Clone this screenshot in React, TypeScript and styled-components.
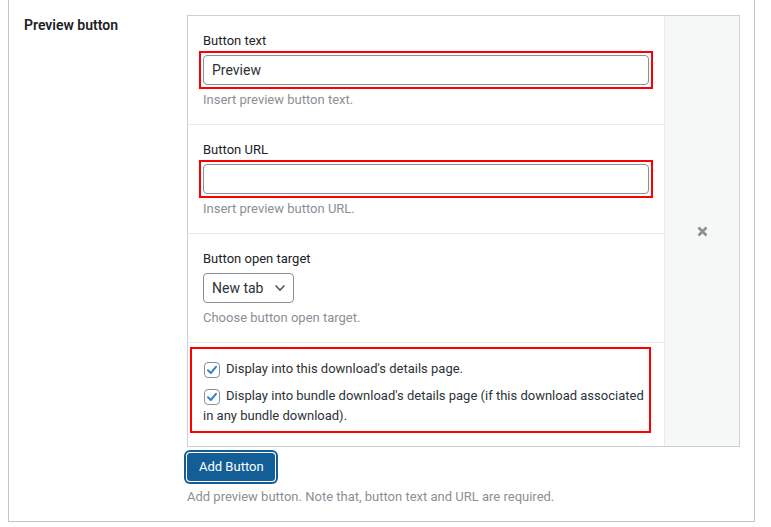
import React from 'react';
import styled, { createGlobalStyle } from 'styled-components';

const GlobalStyle = createGlobalStyle`
  html, body {
    margin: 0;
    padding: 0;
    background: #fff;
  }
  body {
    font-family: Roboto, "Noto Sans", "Liberation Sans", sans-serif;
    font-size: 13px;
    line-height: 18px;
    color: #1d2327;
  }
  * {
    box-sizing: border-box;
  }
`;

const Page = styled.div`
  padding-left: 8px;
`;

const Frame = styled.div`
  width: 747px;
  display: flex;
  padding: 15px 0 15px;
  border: 1px solid #c3c4c7;
  border-top: none;
`;

const RowHeading = styled.div`
  width: 178px;
  flex: none;
  padding: 1px 0 0 15px;
  font-size: 14px;
  font-weight: 600;
  line-height: 18px;
`;

const FieldColumn = styled.div`
  flex: none;
  width: 553px;
`;

const Repeater = styled.div`
  display: flex;
  border: 1px solid #cfcfd1;
  background: #fff;
`;

const Fields = styled.div`
  flex: none;
  width: 476px;
`;

const Field = styled.div<{ $compact?: boolean }>`
  padding: ${(p) => (p.$compact ? '4px 13px 13px 2px' : '16px 15px 15px 15px')};
  border-bottom: 1px solid #eaeaeb;

  &:last-child {
    border-bottom: none;
  }
`;

const FieldLabel = styled.div`
  font-size: 13px;
  line-height: 18px;
`;

const Highlight = styled.div<{ $pad?: string }>`
  border: 2px solid #ff0000;
  padding: ${(p) => p.$pad || '2px'};
  margin: ${(p) => (p.$pad ? '0' : '1px -4px -4px')};
`;

const TextInput = styled.div`
  height: 30px;
  border: 1px solid #8c8f94;
  border-radius: 4px;
  padding: 0 8px;
  font-size: 14px;
  line-height: 28px;
  color: #2c3338;
  background: #fff;
`;

const Help = styled.div`
  margin-top: 6px;
  color: #8c8f94;
  font-size: 13px;
  line-height: 18px;
`;

const Select = styled.div`
  margin-top: 5px;
  width: 91px;
  height: 30px;
  display: flex;
  align-items: center;
  justify-content: space-between;
  padding: 0 7px 0 8px;
  border: 1px solid #8c8f94;
  border-radius: 4px;
  font-size: 14px;
  color: #2c3338;
`;

const CheckLine = styled.label`
  display: block;
  font-size: 13px;
  line-height: 20px;
  color: #2c3338;

  & + & {
    margin-top: 7px;
  }
`;

const Box = styled.span`
  display: inline-flex;
  align-items: center;
  justify-content: center;
  width: 16px;
  height: 16px;
  margin: 0 6px 0 1px;
  vertical-align: -3px;
  border: 1px solid #8c8f94;
  border-radius: 4px;
  background: #fff;
`;

const Remove = styled.div`
  flex: 1;
  display: flex;
  align-items: center;
  justify-content: center;
  background: #f6f7f7;
  border-left: 1px solid #ebebeb;
`;

const AddButton = styled.button`
  display: block;
  margin: 6px 0 0 0;
  height: 28px;
  padding: 0 10px 0 11px;
  border: 1px solid #135e96;
  border-radius: 3px;
  background: #135e96;
  color: #fff;
  font-family: inherit;
  font-size: 13px;
  line-height: 26px;
  box-shadow: 0 0 0 1px #fff, 0 0 0 3px #135e96;
`;

const FootNote = styled(Help)`
  margin-top: 7px;
`;

const Check = () => (
  <Box>
    <svg width="12" height="12" viewBox="0 0 12 12">
      <path d="M2 6.3 L4.8 9 L10 2.8" fill="none" stroke="#3582c4" strokeWidth="2" strokeLinecap="round" strokeLinejoin="round" />
    </svg>
  </Box>
);

export default function App() {
  return (
    <Page>
      <GlobalStyle />
      <Frame>
        <RowHeading>Preview button</RowHeading>
        <FieldColumn>
          <Repeater>
            <Fields>
              <Field>
                <FieldLabel>Button text</FieldLabel>
                <Highlight>
                  <TextInput>Preview</TextInput>
                </Highlight>
                <Help>Insert preview button text.</Help>
              </Field>
              <Field>
                <FieldLabel>Button URL</FieldLabel>
                <Highlight>
                  <TextInput />
                </Highlight>
                <Help>Insert preview button URL.</Help>
              </Field>
              <Field>
                <FieldLabel>Button open target</FieldLabel>
                <Select>
                  <span>New tab</span>
                  <svg width="12" height="8" viewBox="0 0 12 8">
                    <path d="M1.5 1.5 L6 6 L10.5 1.5" fill="none" stroke="#50575e" strokeWidth="1.6" />
                  </svg>
                </Select>
                <Help>Choose button open target.</Help>
              </Field>
              <Field $compact>
                <Highlight $pad="10px 1px 5px 11px">
                  <CheckLine>
                    <Check />
                    Display into this download's details page.
                  </CheckLine>
                  <CheckLine>
                    <Check />
                    Display into bundle download's details page (if this download associated in any bundle download).
                  </CheckLine>
                </Highlight>
              </Field>
            </Fields>
            <Remove>
              <svg width="11" height="11" viewBox="0 0 11 11">
                <path d="M1.5 1.5 L9.5 9.5 M9.5 1.5 L1.5 9.5" stroke="#8c8f94" strokeWidth="2.6" />
              </svg>
            </Remove>
          </Repeater>
          <AddButton>Add Button</AddButton>
          <FootNote>Add preview button. Note that, button text and URL are required.</FootNote>
        </FieldColumn>
      </Frame>
    </Page>
  );
}
